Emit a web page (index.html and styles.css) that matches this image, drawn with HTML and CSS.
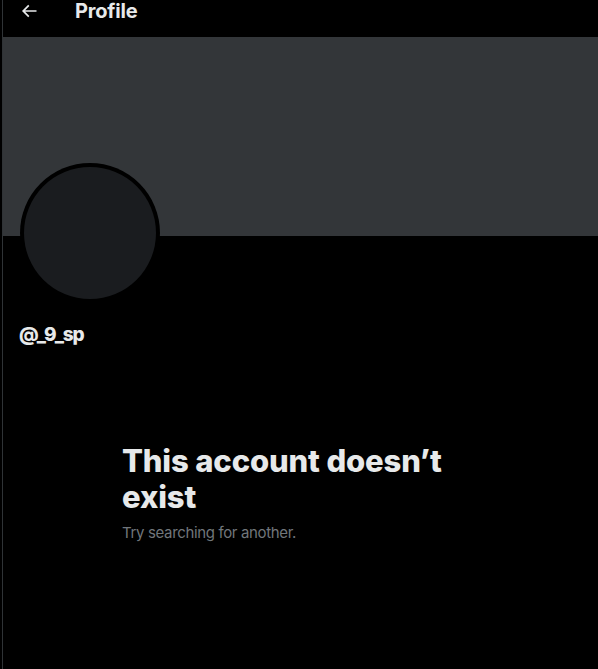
FILE: index.html
```html
<!DOCTYPE html>
<html>
<head>
<meta charset="utf-8">
<link rel="stylesheet" href="styles.css">
</head>
<body>
<main class="column">
  <header class="topbar">
    <button class="back" aria-label="Back">
      <svg viewBox="0 0 24 24" width="20" height="20"><path d="M7.414 13l5.043 5.043-1.414 1.414L3.586 12l7.457-7.457 1.414 1.414L7.414 11H21v2H7.414z"/></svg>
    </button>
    <h2 class="title">Profile</h2>
  </header>
  <div class="banner"></div>
  <section class="profile">
    <div class="avatar"><div class="avatar-inner"></div></div>
    <div class="handle">@_9_sp</div>
  </section>
  <section class="empty">
    <h1 class="empty-title">This account doesn’t exist</h1>
    <p class="empty-sub">Try searching for another.</p>
  </section>
</main>
</body>
</html>
```
FILE: styles.css
```css
html, body {
  margin: 0;
  padding: 0;
  background: #000;
  height: 100%;
}
body {
  font-family: Inter, "Liberation Sans", sans-serif;
  color: #e7e9ea;
}
.column {
  margin-left: 2px;
  border-left: 1px solid #2f3336;
  min-height: 100%;
  box-sizing: border-box;
}
.topbar {
  height: 37px;
  display: flex;
  align-items: flex-start;
  padding-left: 16px;
}
.back {
  background: none;
  border: 0;
  padding: 0;
  margin-top: 1px;
  width: 20px;
  height: 20px;
  display: flex;
  fill: #e7e9ea;
}
.title {
  margin: 0 0 0 36px;
  font-size: 20px;
  line-height: 22px;
  font-weight: 700;
  letter-spacing: -0.2px;
}
.banner {
  height: 199px;
  background: #333639;
}
.profile {
  padding: 0 16px;
}
.avatar {
  margin-top: -73px;
  margin-left: 1px;
  width: 140px;
  height: 140px;
  border-radius: 50%;
  background: #000;
  padding: 4px;
  box-sizing: border-box;
}
.avatar-inner {
  width: 100%;
  height: 100%;
  border-radius: 50%;
  background: #1a1c1f;
}
.handle {
  margin-top: 20px;
  font-size: 19px;
  line-height: 24px;
  font-weight: 800;
  letter-spacing: -1.1px;
}
.empty {
  margin: 96px 0 0 119px;
  max-width: 340px;
}
.empty-title {
  margin: 0 0 8px;
  font-size: 31px;
  line-height: 36px;
  font-weight: 800;
  letter-spacing: -0.15px;
}
.empty-sub {
  margin: 0;
  font-size: 15px;
  line-height: 20px;
  color: #71767b;
  letter-spacing: -0.35px;
}
```
